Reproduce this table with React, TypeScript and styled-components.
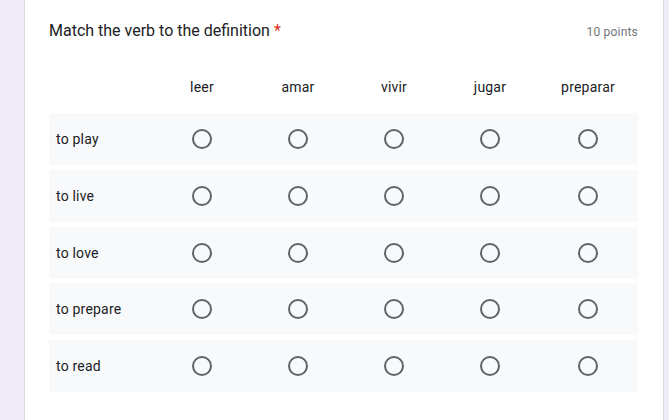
import React from "react";
import styled, { createGlobalStyle } from "styled-components";

const Global = createGlobalStyle`
  html, body { margin: 0; padding: 0; background: #f0ebf8; }
  body { font-family: Roboto, "Liberation Sans", Arial, sans-serif; }
`;

const Page = styled.div`
  width: 669px;
  height: 420px;
  overflow: hidden;
  background: #f0ebf8;
`;

const Card = styled.section`
  margin-left: 24px;
  width: 640px;
  box-sizing: border-box;
  background: #ffffff;
  border: 1px solid #dadce0;
  border-top: none;
  padding: 19px 24px 24px 24px;
  height: 440px;
`;

const Header = styled.div`
  display: flex;
  justify-content: space-between;
  align-items: baseline;
  height: 24px;
`;

const Title = styled.div`
  font-size: 16px;
  line-height: 24px;
  color: #202124;
`;

const Required = styled.span`
  color: #d93025;
  margin-left: 4px;
`;

const Points = styled.div`
  font-size: 12px;
  color: #70757a;
  letter-spacing: 0.2px;
  margin-right: 1px;
`;

const Grid = styled.div`
  margin-top: 23px;
  display: grid;
  grid-template-columns: 105px 96px 96px 96px 96px 100px;
  row-gap: 4.75px;
`;

const HeaderRow = styled.div`
  display: contents;
`;

const ColHead = styled.div`
  height: 42.25px;
  display: flex;
  align-items: center;
  justify-content: center;
  font-size: 14px;
  color: #202124;
  letter-spacing: 0.2px;
`;

const Row = styled.div`
  grid-column: 1 / -1;
  display: grid;
  grid-template-columns: subgrid;
  background: #f8f9fa;
  height: 52px;
`;

const RowLabel = styled.div`
  display: flex;
  align-items: center;
  padding-left: 7px;
  font-size: 14px;
  color: #202124;
  letter-spacing: 0.2px;
`;

const Cell = styled.div`
  display: flex;
  align-items: center;
  justify-content: center;
`;

const Radio = styled.div`
  width: 20px;
  height: 20px;
  box-sizing: border-box;
  border: 2px solid #5f6368;
  border-radius: 50%;
`;

const cols = ["leer", "amar", "vivir", "jugar", "preparar"];
const rows = ["to play", "to live", "to love", "to prepare", "to read"];

export default function App() {
  return (
    <Page>
      <Global />
      <Card>
        <Header>
          <Title>
            Match the verb to the definition<Required>*</Required>
          </Title>
          <Points>10 points</Points>
        </Header>
        <Grid>
          <HeaderRow>
            <ColHead />
            {cols.map((c) => (
              <ColHead key={c}>{c}</ColHead>
            ))}
          </HeaderRow>
          {rows.map((r) => (
            <Row key={r}>
              <RowLabel>{r}</RowLabel>
              {cols.map((c) => (
                <Cell key={c}>
                  <Radio />
                </Cell>
              ))}
            </Row>
          ))}
        </Grid>
      </Card>
    </Page>
  );
}
